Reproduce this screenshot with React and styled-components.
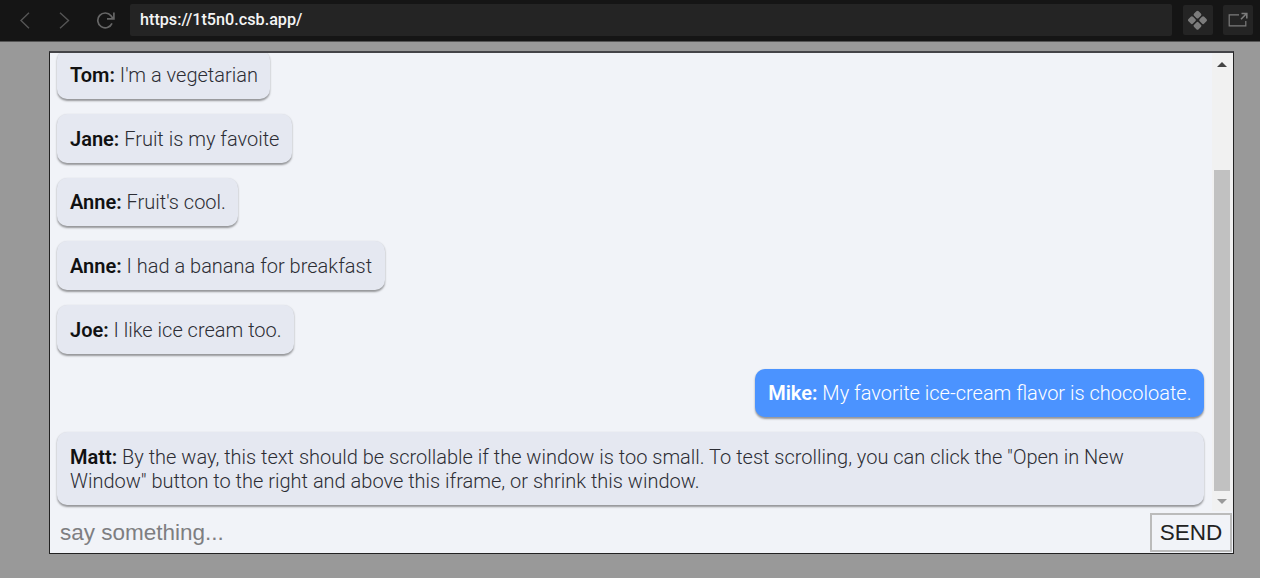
import React from "react";
import styled, { createGlobalStyle } from "styled-components";

const GlobalStyle = createGlobalStyle`
  * { box-sizing: border-box; }
  body { margin: 0; background: #fff; font-family: Roboto, sans-serif; overflow: hidden; }
`;

const Browser = styled.div`
  width: 1260px;
  height: 578px;
  display: flex;
  flex-direction: column;
  background: #999;
`;

const Toolbar = styled.header`
  display: flex;
  align-items: center;
  height: 42px;
  padding: 0 7px 1px 17px;
  background: #151515;
  border-bottom: 1px solid #555;
`;

const NavButton = styled.span`
  display: flex;
  width: ${(p) => p.$width || 39}px;
  flex: none;
  color: ${(p) => p.$color || "#555"};
`;

const AddressBar = styled.div`
  flex: 1;
  height: 32px;
  margin-right: 11px;
  padding-left: 10px;
  background: #242424;
  border-radius: 2px;
  color: #f4f4f4;
  font-size: 16.2px;
  font-weight: 500;
  line-height: 32px;
`;

const ToolButton = styled.span`
  display: flex;
  align-items: center;
  justify-content: center;
  width: 30px;
  height: 30px;
  margin-left: ${(p) => p.$gap || 0}px;
  border-radius: 2px;
  background: #242424;
  color: #7c7c7c;
`;

const Chat = styled.main`
  display: flex;
  flex-direction: column;
  width: 1185px;
  height: 503px;
  margin: 9px 0 0 49px;
  border: 1px solid #222;
  border-top: 2px solid #444448;
  background: #f1f3f8;
`;

const History = styled.section`
  display: flex;
  height: 458px;
  overflow: hidden;
`;

const Messages = styled.div`
  flex: 1;
  display: flex;
  flex-direction: column;
  justify-content: flex-end;
  gap: 15px;
  padding: 0 8px 6px 7px;
`;

const Bubble = styled.div`
  flex: none;
  align-self: ${(p) => (p.$mine ? "flex-end" : "flex-start")};
  padding: 12.8px 12.5px 11.9px 13px;
  border-radius: 10px;
  background: ${(p) => (p.$mine ? "#4b93ff" : "#e5e8f1")};
  color: ${(p) => (p.$mine ? "#fff" : "#2c2d34")};
  box-shadow: 0 1.5px 2px rgba(0, 0, 0, 0.38);
  font-size: 20px;
  font-weight: 300;
  line-height: 24px;
`;

const Author = styled.b`
  font-weight: 600;
  color: ${(p) => (p.$mine ? "#fff" : "#111")};
`;

const Scrollbar = styled.div`
  display: flex;
  flex-direction: column;
  align-items: center;
  width: 21px;
  padding: 9px 3px 4px 2px;
  background: #f1f1f1;
`;

const Arrow = styled.i`
  width: 0;
  height: 0;
  border: 5px solid transparent;
  border-width: ${(p) => (p.$down ? "5px 5px 0" : "0 5px 5px")};
  border-top-color: ${(p) => (p.$down ? "#999" : "transparent")};
  border-bottom-color: ${(p) => (p.$down ? "transparent" : "#444")};
`;

const Thumb = styled.div`
  width: 16px;
  height: 321px;
  margin: 103px 0 8px;
  background: #c1c1c1;
`;

const Composer = styled.form`
  display: flex;
  flex: 1;
  padding: 2px 1px 1px 0;
`;

const TextInput = styled.input`
  flex: 1;
  min-width: 0;
  padding: 0 10px;
  border: 0;
  outline: 0;
  background: transparent;
  font: 22.5px "Liberation Sans", Arial, sans-serif;
  &::placeholder { color: #7e7e81; }
`;

const SendButton = styled.button`
  width: 82px;
  padding: 0;
  border: 2px solid #bbb;
  background: #f1f3f8;
  color: #222;
  font: 22.5px "Liberation Sans", Arial, sans-serif;
`;

const conversation = [
  ["Tom", "I'm a vegetarian"],
  ["Jane", "Fruit is my favoite"],
  ["Anne", "Fruit's cool."],
  ["Anne", "I had a banana for breakfast"],
  ["Joe", "I like ice cream too."],
  ["Mike", "My favorite ice-cream flavor is chocoloate.", true],
  ["Matt", 'By the way, this text should be scrollable if the window is too small. To test scrolling, you can click the "Open in New Window" button to the right and above this iframe, or shrink this window.'],
];

const Stroke = ({ d, width = 18, weight = 1.4 }) => (
  <svg width={width} height="18" viewBox={`0 0 ${width} 18`} fill="none" stroke="currentColor" strokeWidth={weight}>
    <path d={d} />
  </svg>
);

export default function App() {
  return (
    <>
      <GlobalStyle />
      <Browser>
        <Toolbar>
          <NavButton><Stroke d="M12 1.8 4 9.6l8 7.7" /></NavButton>
          <NavButton><Stroke d="m4 1.8 8.5 7.8L4 17.3" /></NavButton>
          <NavButton $width={35} $color="#666">
            <Stroke width={20} weight={1.7} d="M17 12.3A7.4 7.4 0 1 1 16 4.8L18 7.6M18.9 1.6v6.2H12" />
          </NavButton>
          <AddressBar>https://1t5n0.csb.app/</AddressBar>
          <ToolButton>
            <svg width="20" height="20" viewBox="0 0 20 20" fill="currentColor">
              {[[9.5, 4.6], [3.9, 10.2], [15.1, 10.2], [9.5, 15.8]].map(([x, y]) => (
                <rect key={`${x}-${y}`} x={x - 3.2} y={y - 3.2} width="6.4" height="6.4" rx="1.6" transform={`rotate(45 ${x} ${y})`} />
              ))}
            </svg>
          </ToolButton>
          <ToolButton $gap={10}>
            <svg width="20" height="16" viewBox="0 0 20 16" fill="none" stroke="currentColor" strokeWidth="1.2">
              <path d="M11 2.8H1.2v11h16.6V9" />
              <path d="m13 7.2 5.4-5.4M13.5 1.5h5.3v5" strokeWidth="1.6" />
            </svg>
          </ToolButton>
        </Toolbar>
        <Chat>
          <History>
            <Messages>
              {conversation.map(([name, text, mine]) => (
                <Bubble key={name + text} $mine={mine}><Author $mine={mine}>{name}:</Author> {text}</Bubble>
              ))}
            </Messages>
            <Scrollbar><Arrow /><Thumb /><Arrow $down /></Scrollbar>
          </History>
          <Composer>
            <TextInput placeholder="say something..." />
            <SendButton type="button">SEND</SendButton>
          </Composer>
        </Chat>
      </Browser>
    </>
  );
}
